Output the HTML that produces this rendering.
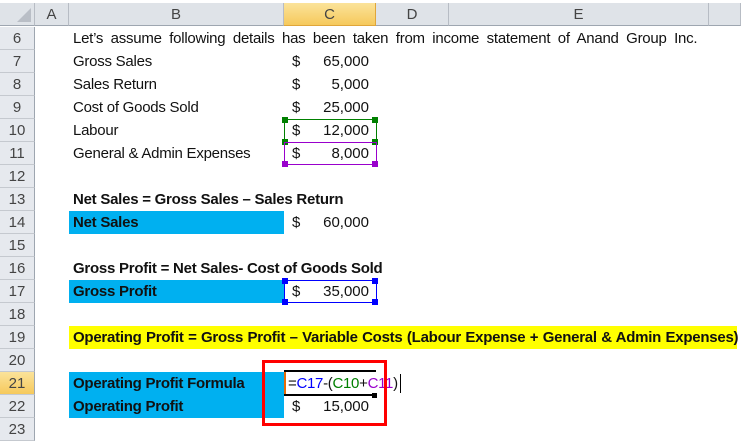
<!DOCTYPE html>
<html><head><meta charset="utf-8"><style>
body{margin:0;width:741px;height:442px;overflow:hidden;background:#fff;position:relative;font-family:"Liberation Sans",sans-serif;}
.a{position:absolute;}
.hd{position:absolute;top:3px;height:23px;background:#dfe3e8;border-right:1px solid #b7bcc4;border-bottom:1px solid #9ea6b0;color:#444;font-size:15px;text-align:center;line-height:24px;box-sizing:border-box;}
.rh{position:absolute;left:0;width:35px;height:23px;background:#e6e9ee;border-bottom:1px solid #c5c9cf;border-right:1px solid #9ea6b0;box-sizing:border-box;color:#444;font-size:15px;text-align:center;line-height:23px;}
.t{position:absolute;font-size:15px;line-height:23px;color:#111;white-space:nowrap;letter-spacing:-0.25px;}
.b{font-weight:bold;}
.d{position:absolute;left:292px;font-size:15px;line-height:23px;color:#111;}
.v{position:absolute;right:372px;font-size:15px;line-height:23px;color:#111;text-align:right;}
.h{position:absolute;width:6px;height:6px;}
</style></head><body>
<div class="a" style="left:0;top:0;width:741px;height:3px;background:#fff;border-bottom:1px solid #aaa"></div>
<div class="hd" style="left:0;width:35px;"><div style="position:absolute;right:3px;bottom:3px;width:0;height:0;border-left:14px solid transparent;border-bottom:14px solid #b9bec6"></div></div>
<div class="hd" style="left:35px;width:34px">A</div>
<div class="hd" style="left:69px;width:215px">B</div>
<div class="hd" style="left:284px;width:92px;background:linear-gradient(#fbe39a,#f6c95c);border-color:#e0a63a">C</div>
<div class="hd" style="left:376px;width:73px">D</div>
<div class="hd" style="left:449px;width:260px">E</div>
<div class="hd" style="left:709px;width:32px"></div>

<div class="rh" style="top:27px">6</div>
<div class="rh" style="top:50px">7</div>
<div class="rh" style="top:73px">8</div>
<div class="rh" style="top:96px">9</div>
<div class="rh" style="top:119px">10</div>
<div class="rh" style="top:142px">11</div>
<div class="rh" style="top:165px">12</div>
<div class="rh" style="top:188px">13</div>
<div class="rh" style="top:211px">14</div>
<div class="rh" style="top:234px">15</div>
<div class="rh" style="top:257px">16</div>
<div class="rh" style="top:280px">17</div>
<div class="rh" style="top:303px">18</div>
<div class="rh" style="top:326px">19</div>
<div class="rh" style="top:349px">20</div>
<div class="rh" style="top:372px;background:linear-gradient(#fbe39a,#f6c95c)">21</div>
<div class="rh" style="top:395px">22</div>
<div class="rh" style="top:418px">23</div>

<div class="a" style="left:69px;top:211px;width:215px;height:23px;background:#00b0f0"></div>
<div class="a" style="left:69px;top:280px;width:215px;height:23px;background:#00b0f0"></div>
<div class="a" style="left:69px;top:326px;width:668px;height:23px;background:#ffff00"></div>
<div class="a" style="left:69px;top:372px;width:215px;height:46px;background:#00b0f0"></div>

<div class="t" style="left:73px;top:27px;word-spacing:3.6px">Let’s assume following details has been taken from income statement of Anand Group Inc.</div>
<div class="t" style="left:73px;top:50px">Gross Sales</div>
<div class="t" style="left:73px;top:73px">Sales Return</div>
<div class="t" style="left:73px;top:96px">Cost of Goods Sold</div>
<div class="t" style="left:73px;top:119px">Labour</div>
<div class="t" style="left:73px;top:142px">General &amp; Admin Expenses</div>
<div class="t b" style="left:73px;top:188px">Net Sales = Gross Sales – Sales Return</div>
<div class="t b" style="left:73px;top:211px">Net Sales</div>
<div class="t b" style="left:73px;top:257px">Gross Profit = Net Sales- Cost of Goods Sold</div>
<div class="t b" style="left:73px;top:280px">Gross Profit</div>
<div class="t b" style="left:73px;top:326px;letter-spacing:-0.25px;word-spacing:0.5px">Operating Profit = Gross Profit – Variable Costs (Labour Expense + General &amp; Admin Expenses)</div>
<div class="t b" style="left:73px;top:372px">Operating Profit Formula</div>
<div class="t b" style="left:73px;top:395px">Operating Profit</div>

<div class="d" style="top:50px">$</div><div class="v" style="top:50px">65,000</div>
<div class="d" style="top:73px">$</div><div class="v" style="top:73px">5,000</div>
<div class="d" style="top:96px">$</div><div class="v" style="top:96px">25,000</div>
<div class="d" style="top:119px">$</div><div class="v" style="top:119px">12,000</div>
<div class="d" style="top:142px">$</div><div class="v" style="top:142px">8,000</div>
<div class="d" style="top:211px">$</div><div class="v" style="top:211px">60,000</div>
<div class="d" style="top:280px">$</div><div class="v" style="top:280px">35,000</div>
<div class="d" style="top:395px">$</div><div class="v" style="top:395px">15,000</div>

<div class="a" style="left:284px;top:119px;width:91px;height:22px;border:1px solid #008000"></div>
<div class="h" style="left:282px;top:117px;background:#008000"></div><div class="h" style="left:372px;top:117px;background:#008000"></div>
<div class="h" style="left:282px;top:139px;background:#008000"></div><div class="h" style="left:372px;top:139px;background:#008000"></div>
<div class="a" style="left:284px;top:142px;width:91px;height:21px;border:1px solid #9900cc"></div>
<div class="h" style="left:282px;top:161px;background:#9900cc"></div><div class="h" style="left:372px;top:161px;background:#9900cc"></div>
<div class="a" style="left:284px;top:280px;width:91px;height:21px;border:1px solid #0000ff"></div>
<div class="h" style="left:282px;top:278px;background:#0000ff"></div><div class="h" style="left:372px;top:278px;background:#0000ff"></div>
<div class="h" style="left:282px;top:299px;background:#0000ff"></div><div class="h" style="left:372px;top:299px;background:#0000ff"></div>

<div class="a" style="left:284px;top:370px;width:92px;height:2px;background:#000"></div>
<div class="a" style="left:284px;top:394px;width:88px;height:2px;background:#000"></div>
<div class="a" style="left:372px;top:393px;width:5px;height:5px;background:#000"></div>
<div class="a" style="left:284px;top:372px;width:2px;height:22px;background:#e36c09"></div>
<div class="t" style="left:288px;top:372px;letter-spacing:-0.3px">=<span style="color:#0000ff">C17</span>-(<span style="color:#008000">C10</span>+<span style="color:#9900cc">C11</span>)</div>
<div class="a" style="left:400px;top:374px;width:1px;height:19px;background:#000"></div>

<div class="a" style="left:262px;top:360px;width:119px;height:60px;border:3px solid #ff0000"></div>
</body></html>
